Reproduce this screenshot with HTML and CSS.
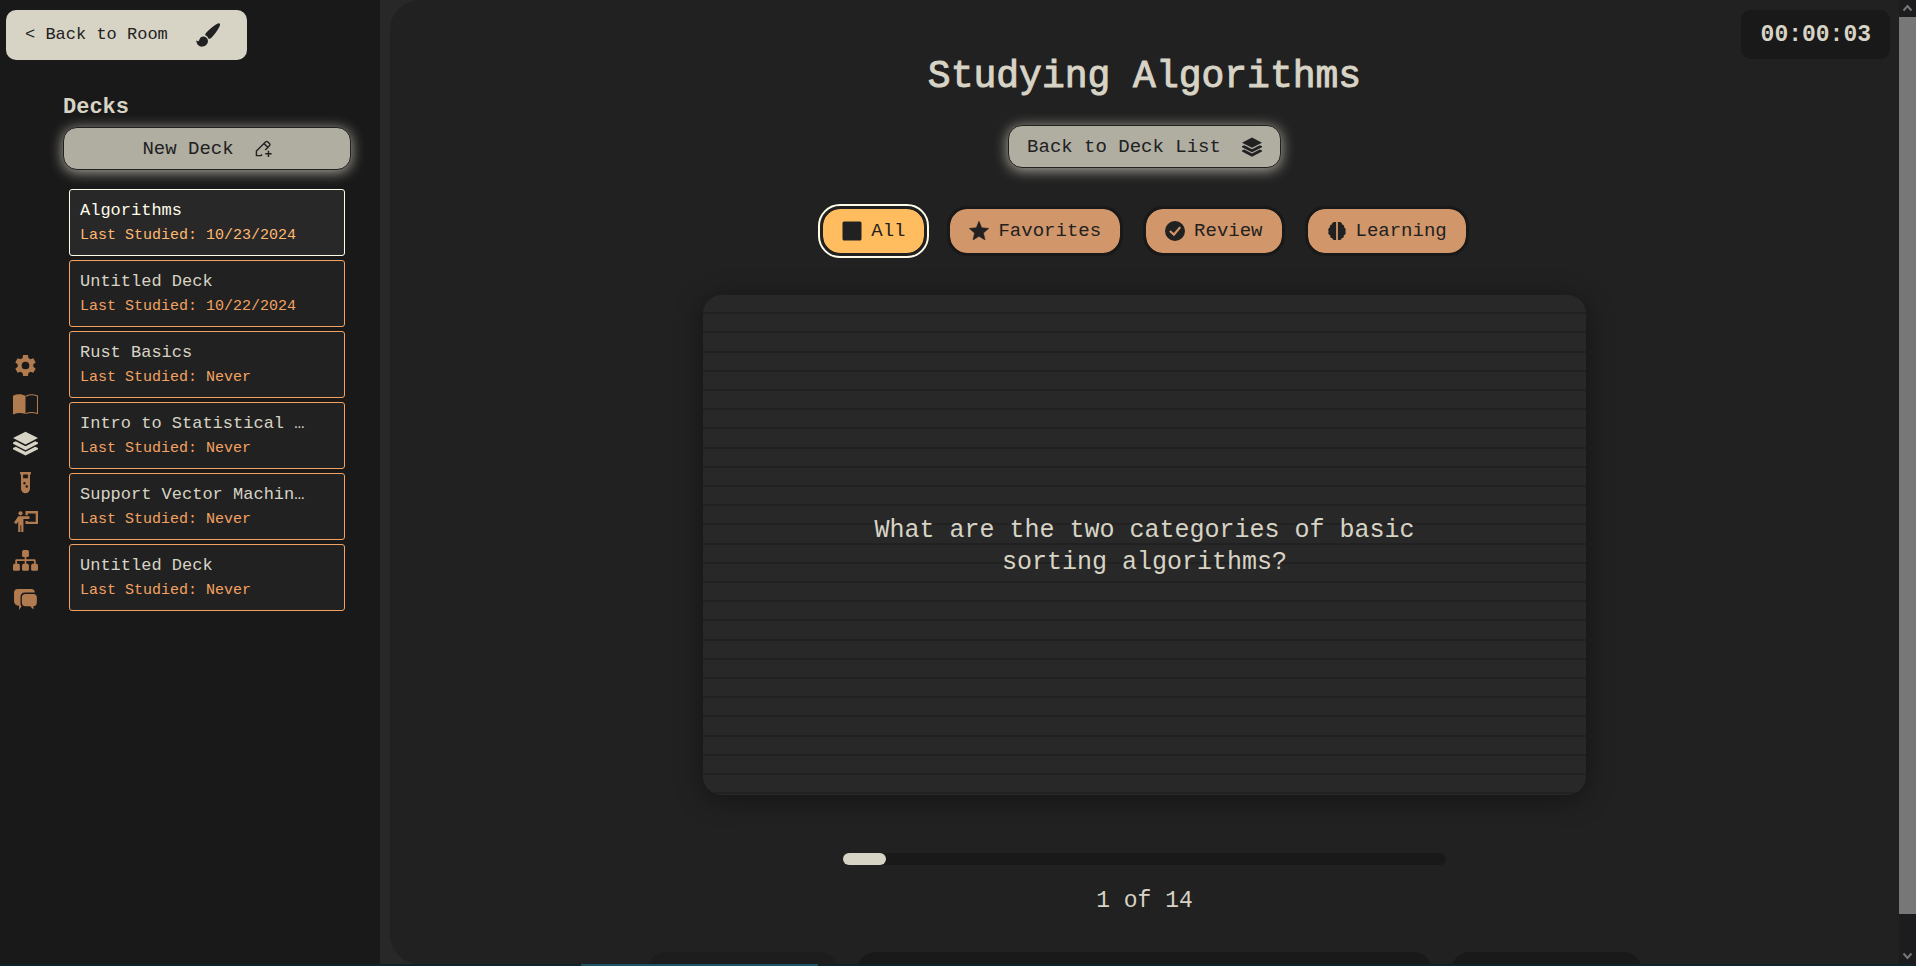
FILE: index.html
```html
<!DOCTYPE html>
<html lang="en">
<head>
<meta charset="utf-8">
<title>Studying Algorithms</title>
<link rel="stylesheet" href="styles.css">
</head>
<body>
<svg class="sprite" aria-hidden="true">
  <symbol id="layers" viewBox="0 0 24 24">
    <path d="M12 .6 24 6.800 12 13 0 6.800z"/>
    <path d="M0 11.100l2.700-1.300L12 14.600l9.300-4.800 2.700 1.300v1.100L12 18.400 0 12.200z"/>
    <path d="M0 16.300l2.700-1.300L12 19.800l9.300-4.800 2.700 1.300v1.100L12 23.600 0 17.400z"/>
  </symbol>
</svg>
<div class="app">
  <aside class="sidebar">
    <button class="room-button" type="button">
      <span>&lt; Back to Room</span>
      <svg class="brush" viewBox="0 0 24 24" aria-hidden="true"><path d="M23.600.6c.7.6.4 2-.2 3.200-2 3.800-5.300 8.400-8.200 11.200-.7.700-1.600.8-2.700.7-.6-1.700-1.700-2.800-3.300-3.400.1-1 .3-1.700 1-2.500C13.200 6.300 17.700 2.800 21.200.8c1-.6 1.900-.7 2.400-.2z"/><path d="M8 13.600c1.900.3 3.500 1.800 3.900 3.700.4 2.900-1.600 5.900-5.300 6.300C3.100 24 .5 21.500.3 17.300c1.100.9 2 1.200 2.600.5.9-1.200 1-4.700 5.100-4.200z"/></svg>
    </button>
    <nav class="rail" aria-label="Sections">
      <button type="button" aria-label="Settings"><svg viewBox="0 0 24 24"><path fill-rule="evenodd" d="M9.700 2h4.600l.5 2.900 1.900 1.100 2.800-1 2.300 4-2.300 1.900v2.200l2.300 1.900-2.300 4-2.800-1-1.900 1.100-.5 2.900H9.700l-.5-2.900-1.900-1.100-2.800 1-2.300-4 2.300-1.900v-2.200L2.200 9l2.300-4 2.800 1 1.900-1.100zM12 8.300a3.700 3.700 0 1 0 0 7.400 3.700 3.700 0 0 0 0-7.400z"/></svg></button>
      <button type="button" aria-label="Notes"><svg viewBox="0 0 24 24"><path d="M0 3.500C4 1.600 8.500 1.600 12 3.600v17.600c-3.600-1.400-8-1.200-12 .4z"/><path class="line" d="M12.500 4c3.200-1.600 7.200-1.600 11-.2v16.900c-3.800-1.300-7.700-1.300-11-.1"/></svg></button>
      <button class="current" type="button" aria-label="Decks"><svg><use href="#layers"/></svg></button>
      <button type="button" aria-label="Lab"><svg viewBox="0 0 24 24"><path fill-rule="evenodd" d="M6.800 2h10.400v2.200h-.9v13.600c0 6-8.600 6-8.600 0V4.200h-.9zM9.700 4.200V8h4.600V4.200zM11 11.500a1.100 1.100 0 1 0 0 2.300 1.100 1.100 0 0 0 0-2.300zM13.200 14.700a1.200 1.200 0 1 0 0 2.400 1.200 1.200 0 0 0 0-2.400z"/></svg></button>
      <button type="button" aria-label="Teach"><svg viewBox="0 0 24 24"><circle cx="7.200" cy="4.200" r="2"/><path d="M5 7h10.800v2.600H10V22H7.900v-6.500h-.8V22H5V12.200L3.200 14.500.9 13.200z"/><path d="M12 2h12v12.500H12v-3h2.200v.8h7.600V4.300h-7.600V6H12z"/></svg></button>
      <button type="button" aria-label="Map"><svg viewBox="0 0 24 24"><rect x="8.700" y="2" width="6.600" height="6.600" rx="1.500"/><rect x="0" y="15.200" width="6.600" height="6.600" rx="1.500"/><rect x="8.700" y="15.200" width="6.600" height="6.600" rx="1.500"/><rect x="17.400" y="15.200" width="6.600" height="6.600" rx="1.500"/><path d="M11.200 8h1.600v2.800h7.700q1.300 0 1.300 1.300v3.500h-1.700v-3.200h-7.300v3.200h-1.600v-3.200H3.900v3.200H2.200v-3.500q0-1.300 1.300-1.300h7.700z"/></svg></button>
      <button type="button" aria-label="Chat"><svg viewBox="0 0 24 24"><path d="M4.500 2h13c2 0 3.200 1 3.500 3.200H11.500C8.700 5.200 7.200 7 7.200 9.500V17l1 1.500L5.800 22v-4C2.400 17.800 1 16 1 13V6c0-2.700 1.200-4 3.500-4z"/><path d="M12 6.700h7.700c2 0 3.200 1.200 3.200 3.300v4.800c0 2.200-1.200 3.500-3.200 3.500v3.200l-3.200-3.100H12c-2.300 0-3.500-1.300-3.500-3.500V10c0-2.100 1.200-3.300 3.500-3.300z"/></svg></button>
    </nav>
    <section class="decks">
      <h2>Decks</h2>
      <button class="pale-button" type="button">
        <span>New Deck</span>
        <svg class="small-icon outlined" viewBox="0 0 24 24" aria-hidden="true"><path d="M10 20.500L8.500 22H2v-6.500L14.800 2.700q1.700-1.500 3.400 0l2.100 2.100q1.500 1.700 0 3.400L14.500 14M12.600 5l5.400 5.400M19 15v9M14.500 19.500h9"/></svg>
      </button>
      <ul class="deck-list">
        <li><button class="deck selected" type="button"><strong>Algorithms</strong><small>Last Studied: 10/23/2024</small></button></li>
        <li><button class="deck" type="button"><strong>Untitled Deck</strong><small>Last Studied: 10/22/2024</small></button></li>
        <li><button class="deck" type="button"><strong>Rust Basics</strong><small>Last Studied: Never</small></button></li>
        <li><button class="deck" type="button"><strong>Intro to Statistical …</strong><small>Last Studied: Never</small></button></li>
        <li><button class="deck" type="button"><strong>Support Vector Machin…</strong><small>Last Studied: Never</small></button></li>
        <li><button class="deck" type="button"><strong>Untitled Deck</strong><small>Last Studied: Never</small></button></li>
      </ul>
    </section>
  </aside>
  <div class="stage">
    <main class="panel">
      <div class="timer" role="timer">00:00:03</div>
      <h1>Studying Algorithms</h1>
      <button class="pale-button" type="button">
        <span>Back to Deck List</span>
        <svg class="chip-icon" aria-hidden="true"><use href="#layers"/></svg>
      </button>
      <div class="filters">
        <button class="chip active" type="button"><svg class="chip-icon" viewBox="0 0 20 20" aria-hidden="true"><rect x=".5" y=".5" width="19" height="19" rx="1.500"/></svg>All</button>
        <button class="chip" type="button"><svg class="chip-icon" viewBox="0 0 20 20" aria-hidden="true"><path d="M10 .3l2.700 6.500 7 .6-5.300 4.600 1.600 6.900L10 15.300l-6 3.600 1.600-6.900L.3 7.400l7-.6z" stroke="currentColor" stroke-width=".6" stroke-linejoin="round"/></svg>Favorites</button>
        <button class="chip" type="button"><svg class="chip-icon" viewBox="0 0 20 20" aria-hidden="true"><path fill-rule="evenodd" d="M10 0a10 10 0 1 0 0 20 10 10 0 0 0 0-20zM14.400 5.400l1.700 1.300L9 15.200 4.200 10.800l1.400-1.500L8.800 12.100z"/></svg>Review</button>
        <button class="chip" type="button"><svg class="chip-icon" viewBox="0 0 20 20" aria-hidden="true"><path d="M9.100 1v18H7.300c-1.200 0-1.900-.7-2.100-1.900-1.500-.1-2.300-1.200-1.900-2.700C1.400 13.700.8 12.200 1.600 10.500.8 8.800 1.400 7.100 2.900 6.600 2.500 5 3.300 3.700 4.900 3.500 5 1.900 5.900 1 7.300 1z"/><path d="M10.900 1v18h1.800c1.200 0 1.900-.7 2.100-1.900 1.500-.1 2.300-1.200 1.900-2.700 1.900-.7 2.500-2.200 1.700-3.900.8-1.700.2-3.400-1.300-3.900.4-1.600-.4-2.900-2-3.100C15 1.900 14.100 1 12.700 1z"/></svg>Learning</button>
      </div>
      <article class="flashcard"><p>What are the two categories of basic sorting algorithms?</p></article>
      <div class="progress" role="progressbar" aria-label="Cards studied" aria-valuemin="0" aria-valuemax="14" aria-valuenow="1"><div class="progress-fill" style="width:7.14%"></div></div>
      <p class="count">1 of 14</p>
      <div class="actions">
        <button class="action muted" type="button" aria-label="Previous"></button>
        <button class="action wide" type="button" aria-label="Flip"></button>
        <button class="action" type="button" aria-label="Next"></button>
      </div>
    </main>
  </div>
  <div class="scrollbar" aria-hidden="true">
    <svg viewBox="0 0 17 17"><path d="M4.500 10.500l4-4.500 4 4.500"/></svg>
    <div class="thumb"></div>
    <svg viewBox="0 0 17 17"><path d="M4.500 6.500l4 4.500 4-4.500"/></svg>
  </div>
</div>
<div class="edge"><div class="edge-light"></div></div>
</body>
</html>
```
FILE: styles.css
```css
* { box-sizing: border-box; }

body {
  margin: 0;
  height: 100vh;
  display: flex;
  flex-direction: column;
  overflow: hidden;
  background: #191919;
  color: #d7d3c5;
  font: 19px/24px "Liberation Mono", monospace;
}

h1, h2, p, ul { margin: 0; padding: 0; }
button { font: inherit; color: #212121; cursor: pointer; }
svg { fill: currentColor; flex: none; }
.sprite { position: absolute; width: 0; height: 0; }

.app { flex: 1; min-height: 0; display: flex; }

/* Sidebar */
.sidebar {
  flex: 0 0 380px;
  display: grid;
  grid-template-columns: 51px 1fr;
  grid-template-rows: auto 1fr;
  background: #191919;
}
.room-button {
  grid-area: 1 / 1 / 2 / 3;
  z-index: 1;
  justify-self: start;
  display: flex;
  align-items: center;
  gap: 28px;
  height: 50px;
  margin: 10px 6px 0;
  padding: 0 27px 0 19px;
  border: 0;
  border-radius: 10px;
  background: #d7d3c5;
  font-size: 17px;
}
.brush { width: 24px; height: 24px; }

.rail {
  grid-area: 1 / 1 / 3 / 2;
  display: flex;
  flex-direction: column;
  justify-content: center;
  align-items: center;
  gap: 14px;
}
.rail button {
  display: flex;
  padding: 0;
  border: 0;
  background: none;
  color: #b17b50;
}
.rail button.current { color: #d7d3c5; }
.rail svg { width: 25px; height: 25px; }
.line { fill: none; stroke: currentColor; }

.decks {
  grid-area: 2 / 2 / 3 / 3;
  display: flex;
  flex-direction: column;
  padding: 34px 29px 0 12px;
}
.decks h2 { font-size: 22px; line-height: 28px; margin-bottom: 5px; }

.pale-button {
  display: flex;
  align-items: center;
  justify-content: center;
  gap: 21px;
  min-height: 43px;
  padding: 0 18px;
  border: 1px solid #212121;
  border-radius: 14px;
  background: #b0ada1;
  box-shadow: 0 2px 14px rgba(215, 211, 197, 0.8);
}
.small-icon { width: 17px; height: 17px; }
.outlined { fill: none; stroke: currentColor; stroke-width: 2; }

.deck-list {
  display: grid;
  gap: 4px;
  margin-top: 19px;
  padding: 0 6px;
  list-style: none;
}
.deck {
  display: flex;
  flex-direction: column;
  width: 100%;
  height: 67px;
  padding: 8px 10px;
  border: 1px solid #f4a261;
  border-radius: 3px;
  background: #212121;
  color: #d7d3c5;
  text-align: left;
}
.deck strong { font-size: 17px; font-weight: 400; line-height: 25px; }
.deck small { font-size: 15px; line-height: 26px; color: #f4a261; }
.deck.selected { background: #282828; border-color: #fffbe9; color: #fffbe9; }
.deck.selected small { color: #ffb870; }

/* Study area */
.stage { flex: 1; min-width: 0; display: flex; padding-left: 10px; background: #282828; }
.panel {
  position: relative;
  flex: 1;
  display: flex;
  flex-direction: column;
  align-items: center;
  padding-top: 53px;
  overflow: hidden;
  border-radius: 30px 0 0 30px;
  background: #212121;
}
.timer {
  position: absolute;
  top: 10px;
  right: 9px;
  padding: 1px 19px 0 20px;
  border-radius: 10px;
  background: #191919;
  font-size: 23px;
  font-weight: 700;
  line-height: 48px;
}
h1 { font-size: 38px; font-weight: 400; line-height: 48px; -webkit-text-stroke: 1px currentColor; }
.panel .pale-button { margin-top: 24px; }
.chip-icon { width: 20px; height: 20px; }

.filters { display: flex; gap: 20px; margin-top: 38px; }
.chip {
  display: flex;
  align-items: center;
  gap: 9px;
  height: 50px;
  padding: 0 19px;
  border: 3px solid #191919;
  border-radius: 20px;
  background: #d19669;
  background-clip: padding-box;
}
.chip.active {
  border-color: #212121;
  background-color: #ffbd5f;
  outline: 2px solid #fffbe9;
}

.flashcard {
  flex: none;
  display: grid;
  place-items: center;
  width: 58.5%;
  height: 500px;
  margin-top: 39px;
  padding: 4px 160px 0;
  border-radius: 19px;
  background: repeating-linear-gradient(#282828 0 3.45%, #212121 3.45% 3.84%);
  box-shadow: 0 4px 28px rgba(0, 0, 0, 0.4);
  font-size: 25px;
  line-height: 32px;
  text-align: center;
}

.progress {
  flex: none;
  width: 40%;
  height: 12px;
  margin-top: 58px;
  border-radius: 6px;
  background: #191919;
}
.progress-fill { height: 100%; border-radius: 6px; background: #d7d3c5; }
.count { margin-top: 21px; font-size: 23px; line-height: 30px; }

.actions { display: flex; gap: 19px; width: 66%; margin-top: 36px; }
.action { flex: 1; height: 60px; padding: 0; border: 0; border-radius: 19px; background: #191919; }
.action.muted { background: #1d1d1d; }
.action.wide { flex: 3; }

/* Page scrollbar */
.scrollbar { flex: 0 0 17px; display: flex; flex-direction: column; justify-content: space-between; background: #1c1c1f; }
.scrollbar svg { width: 17px; height: 17px; fill: none; stroke: #777777; stroke-width: 2; }
.thumb { flex: 0 0 93%; margin-bottom: auto; background: #777777; }

.edge { flex: none; height: 2px; padding-left: 30.3%; background: #10222a; }
.edge-light { width: 17.8%; height: 2px; background: #1f5265; }
```
